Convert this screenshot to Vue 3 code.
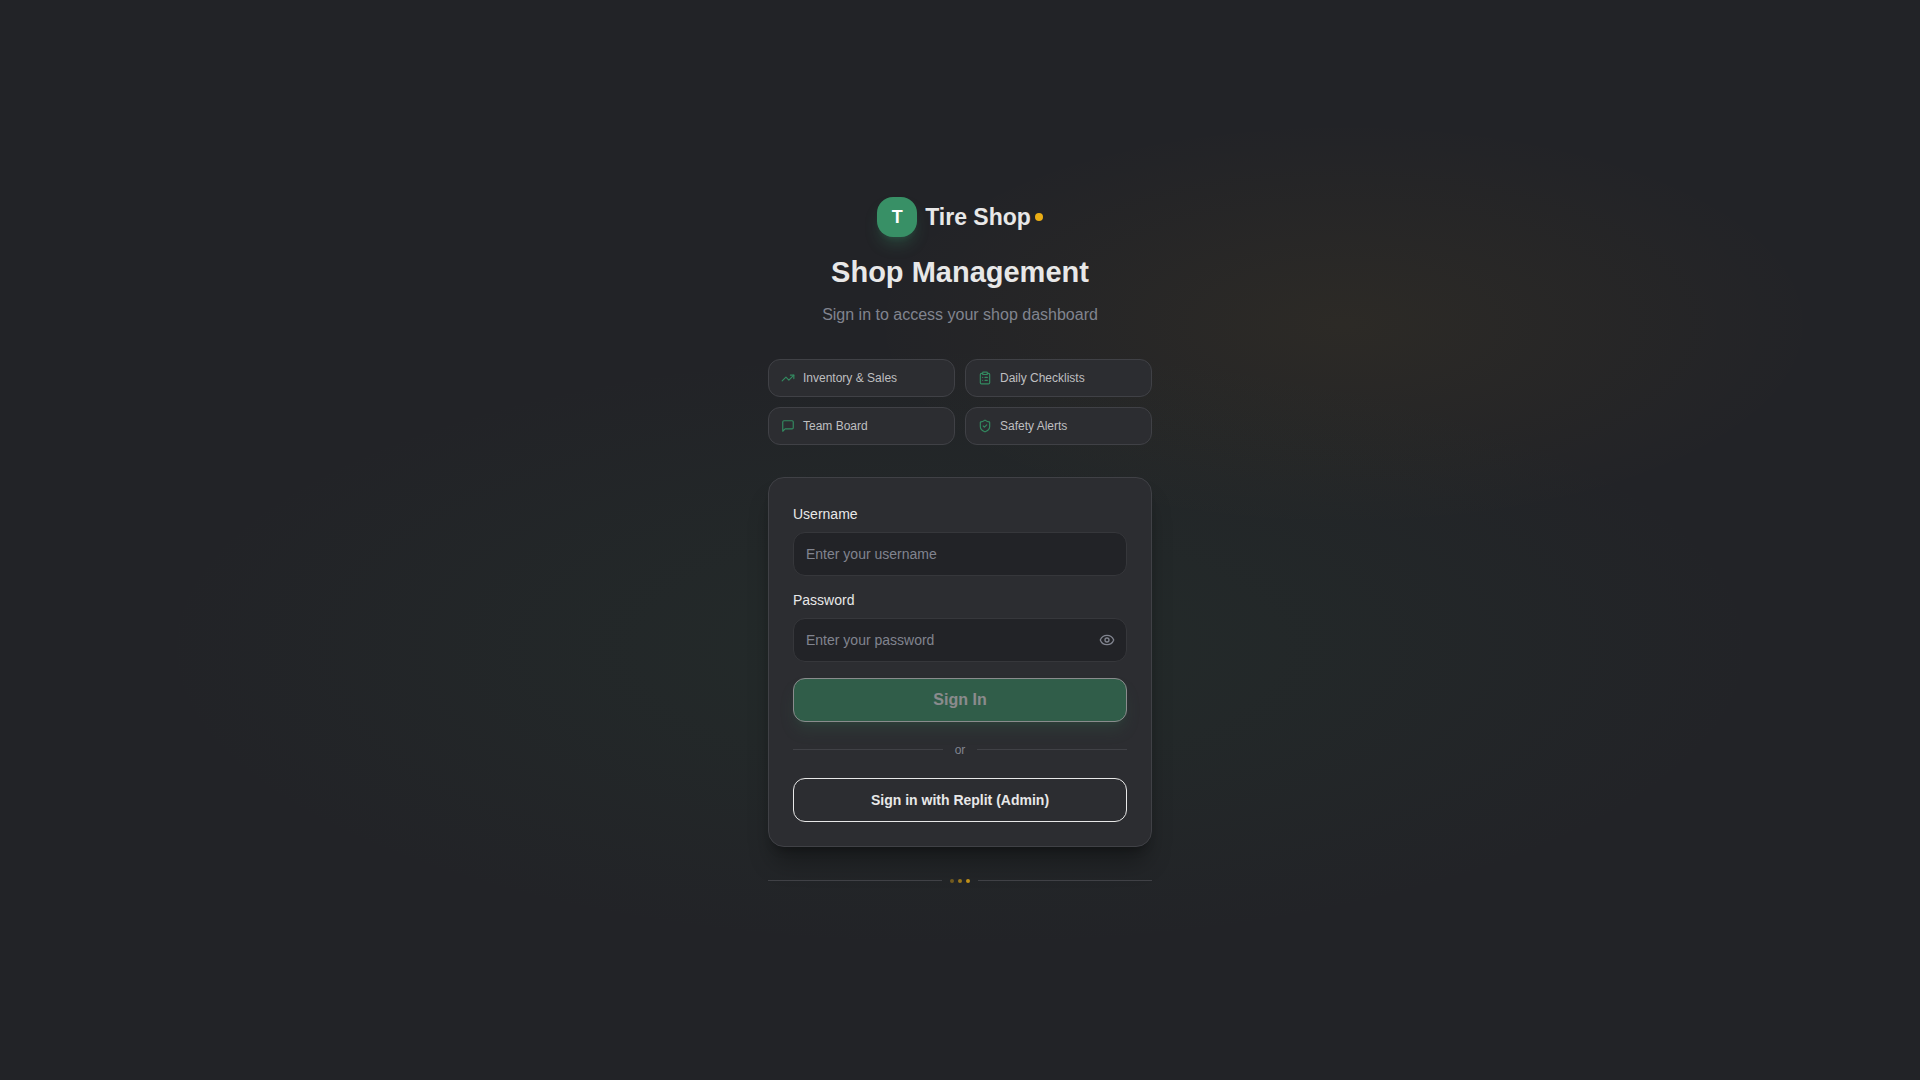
<template>
  <main class="page">
    <div class="column">
      <header class="intro">
        <div class="brand">
          <span class="brand-mark">T</span>
          <span class="brand-name">Tire Shop</span>
          <span class="brand-dot"></span>
        </div>
        <h1>Shop Management</h1>
        <p>Sign in to access your shop dashboard</p>
      </header>

      <ul class="features">
        <li v-for="feature in features" :key="feature.label">
          <svg viewBox="0 0 24 24" aria-hidden="true">
            <path v-for="d in feature.paths" :key="d" :d="d" />
          </svg>
          <span>{{ feature.label }}</span>
        </li>
      </ul>

      <form class="card" @submit.prevent="signIn()">
        <div class="field">
          <label for="username">Username</label>
          <input v-model="username" id="username" type="text" placeholder="Enter your username" autocomplete="username" />
        </div>
        <div class="field">
          <label for="password">Password</label>
          <div class="password-box">
            <input
              v-model="password"
              id="password"
              :type="showPassword ? 'text' : 'password'"
              placeholder="Enter your password"
              autocomplete="current-password"
            />
            <button type="button" class="toggle" aria-label="Show password" @click="showPassword = !showPassword">
              <svg viewBox="0 0 24 24" aria-hidden="true">
                <path
                  d="M2.062 12.348a1 1 0 0 1 0-.696 10.75 10.75 0 0 1 19.876 0 1 1 0 0 1 0 .696 10.75 10.75 0 0 1-19.876 0"
                />
                <circle cx="12" cy="12" r="3" />
              </svg>
            </button>
          </div>
        </div>
        <button type="submit" class="btn btn-primary" :disabled="!canSubmit">Sign In</button>

        <div class="divider"><span>or</span></div>

        <button type="button" class="btn">Sign in with Replit (Admin)</button>
      </form>

      <footer class="footer">
        <i class="dot dot-1"></i>
        <i class="dot dot-2"></i>
        <i class="dot dot-3"></i>
      </footer>
    </div>
  </main>
</template>

<script setup>
import { ref, computed } from 'vue'

const username = ref('')
const password = ref('')
const showPassword = ref(false)

// Sign In stays disabled until both fields are filled
const canSubmit = computed(() => username.value !== '' && password.value !== '')

const features = [
  { label: 'Inventory & Sales', paths: ['M22 7 13.5 15.5 8.5 10.5 2 17', 'M16 7h6v6'] },
  {
    label: 'Daily Checklists',
    paths: [
      'M9 2h6a1 1 0 0 1 1 1v2a1 1 0 0 1-1 1H9a1 1 0 0 1-1-1V3a1 1 0 0 1 1-1z',
      'M16 4h2a2 2 0 0 1 2 2v14a2 2 0 0 1-2 2H6a2 2 0 0 1-2-2V6a2 2 0 0 1 2-2h2',
      'M12 11h4',
      'M12 16h4',
      'M8 11h.01',
      'M8 16h.01'
    ]
  },
  { label: 'Team Board', paths: ['M21 15a2 2 0 0 1-2 2H7l-4 4V5a2 2 0 0 1 2-2h14a2 2 0 0 1 2 2z'] },
  {
    label: 'Safety Alerts',
    paths: [
      'M20 13c0 5-3.5 7.5-7.66 8.95a1 1 0 0 1-.67-.01C7.5 20.5 4 18 4 13V6a1 1 0 0 1 1-1c2 0 4.5-1.2 6.24-2.72a1.17 1.17 0 0 1 1.52 0C14.51 3.81 17 5 19 5a1 1 0 0 1 1 1z',
      'm9 12 2 2 4-4'
    ]
  }
]

function signIn() {
  password.value = ''
}
</script>

<style>
body {
  background-color: #222327;
}
</style>

<style scoped>
.page {
  box-sizing: border-box;
  min-height: 100vh;
  padding: 32px 16px;
  display: flex;
  align-items: center;
  justify-content: center;
  color: #e8e8e8;
  font-family: 'Liberation Sans', Arial, sans-serif;
  background:
    radial-gradient(ellipse 84% 56% at 50% 60%, rgba(52, 141, 80, 0.08), transparent 50%),
    radial-gradient(ellipse 50% 38% at 70% 30%, rgba(234, 173, 21, 0.05), transparent 50%),
    #222327;
}
.column {
  width: 100%;
  max-width: 384px;
  display: flex;
  flex-direction: column;
  gap: 32px;
}

/* Brand and heading */
.intro {
  text-align: center;
}
.brand {
  display: flex;
  align-items: center;
  justify-content: center;
}
.brand-mark {
  width: 40px;
  height: 40px;
  margin-right: 8px;
  border-radius: 16px;
  background-color: #389066;
  color: #fff;
  font-size: 18px;
  font-weight: 700;
  line-height: 40px;
  box-shadow:
    0 10px 15px -3px rgba(56, 144, 102, 0.3),
    0 4px 6px -4px rgba(56, 144, 102, 0.3);
}
.brand-name {
  font-size: 23px;
  font-weight: 700;
  line-height: 32px;
}
.brand-dot {
  width: 8px;
  height: 8px;
  margin-left: 4px;
  border-radius: 50%;
  background-color: #eaad15;
}
.intro h1 {
  margin: 16px 0 12px;
  font-size: 29px;
  font-weight: 700;
  line-height: 38px;
}
.intro p {
  margin: 0;
  color: #81848f;
  font-size: 16px;
  line-height: 24px;
}

/* Feature chips */
.features {
  margin: 0;
  padding: 0;
  list-style: none;
  display: grid;
  grid-template-columns: 1fr 1fr;
  gap: 10px;
}
.features li {
  display: flex;
  align-items: center;
  gap: 8px;
  padding: 10px 12px;
  border: 1px solid #404146;
  border-radius: 12px;
  background-color: #2c2d31;
  color: #bfbfc0;
  font-size: 12px;
  line-height: 16px;
}
svg {
  display: block;
  fill: none;
  stroke: currentColor;
  stroke-width: 2;
  stroke-linecap: round;
  stroke-linejoin: round;
}
.features svg {
  width: 14px;
  height: 14px;
  color: #338a60;
}

/* Login card */
.card {
  padding: 24px;
  border: 1px solid #404146;
  border-radius: 16px;
  background-color: #2c2d31;
  box-shadow:
    0 20px 25px -5px rgba(0, 0, 0, 0.3),
    0 8px 10px -6px rgba(0, 0, 0, 0.3);
}
.field {
  margin-bottom: 12px;
}
.field label {
  display: block;
  margin-bottom: 6px;
  font-size: 14px;
  line-height: 24px;
}
.field input {
  box-sizing: border-box;
  display: block;
  width: 100%;
  height: 44px;
  padding: 0 12px;
  border: 1px solid #36373b;
  border-radius: 12px;
  background-color: #222327;
  color: #e8e8e8;
  font-family: inherit;
  font-size: 14px;
  outline: none;
}
.field input::placeholder {
  color: #81848f;
  opacity: 1;
}
.field input:focus {
  border-color: #389066;
}
.password-box {
  position: relative;
}
.password-box input {
  padding-right: 40px;
}
.toggle {
  position: absolute;
  top: 0;
  right: 0;
  height: 100%;
  padding: 0 12px;
  border: 0;
  background: none;
  color: #81848f;
  cursor: pointer;
}
.toggle svg {
  width: 16px;
  height: 16px;
}
.btn {
  box-sizing: border-box;
  display: block;
  width: 100%;
  height: 44px;
  border: 1px solid #e8e8e8;
  border-radius: 12px;
  background: none;
  color: #e8e8e8;
  font-family: inherit;
  font-size: 14px;
  font-weight: 700;
  cursor: pointer;
}
.btn-primary {
  margin-top: 16px;
  background-color: #348d61;
  font-size: 16px;
  box-shadow:
    0 10px 15px -3px rgba(52, 141, 97, 0.3),
    0 4px 6px -4px rgba(52, 141, 97, 0.3);
}
.btn-primary:disabled {
  opacity: 0.5;
  cursor: default;
}

.divider {
  display: flex;
  align-items: center;
  gap: 12px;
  margin: 20px 0;
  color: #81848f;
  font-size: 12px;
  line-height: 16px;
}
.divider::before,
.divider::after,
.footer::before,
.footer::after {
  content: '';
  flex: 1;
  height: 1px;
  border-top: 1px solid #404146;
}

/* Line with three fading dots */
.footer {
  display: flex;
  align-items: center;
  gap: 4px;
}
.footer::before {
  margin-right: 4px;
}
.footer::after {
  margin-left: 4px;
}
.dot {
  width: 4px;
  height: 4px;
  border-radius: 50%;
  background-color: #eaad15;
}
.dot-1 {
  opacity: 0.4;
}
.dot-2 {
  opacity: 0.6;
}
.dot-3 {
  opacity: 0.8;
}
</style>
